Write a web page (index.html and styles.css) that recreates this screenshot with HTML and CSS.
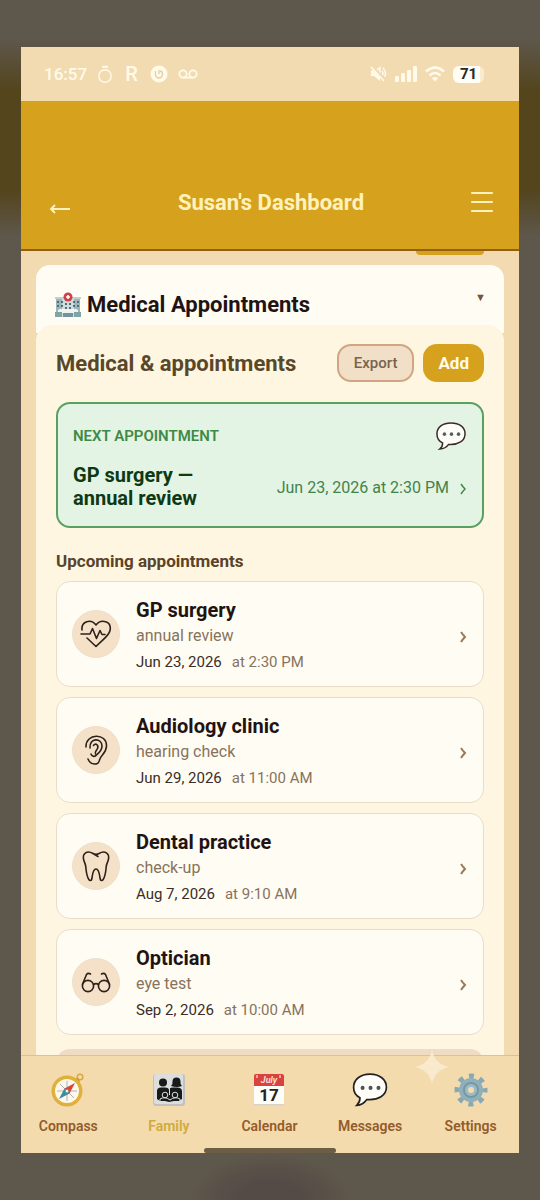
FILE: index.html
```
<!DOCTYPE html>
<html lang="en">

<head>
    <meta charset="UTF-8">
    <meta name="viewport" content="width=device-width, initial-scale=1.0">
    <title>Susan's Dashboard</title>
    <link rel="stylesheet" href="styles.css">
</head>

<body>
    <div class="screen">
        <!-- Status bar -->
        <div class="status-bar">
            <div class="status-left">
                <span class="time">16:57</span>
                <svg width="16" height="18" viewBox="0 0 16 18" fill="none" stroke="currentColor" stroke-width="1.4">
                    <circle cx="8" cy="11" r="6.2" />
                    <path d="M5 1.8h6" stroke-width="2" />
                </svg>
                <span class="carrier">R</span>
                <svg width="18" height="18" viewBox="0 0 18 18" fill="none">
                    <circle cx="9" cy="9" r="8.5" fill="currentColor" />
                    <path d="M5.5 6v3.5a3.5 3.5 0 0 0 7 0c0-2-1-3.5-2.5-3.5M9 5v4" stroke="#e6cfa4" stroke-width="1.4" />
                </svg>
                <svg width="20" height="12" viewBox="0 0 20 12" fill="none" stroke="currentColor" stroke-width="1.8">
                    <circle cx="5" cy="6" r="3.6" />
                    <circle cx="15" cy="6" r="3.6" />
                    <path d="M5 9.6h10" />
                </svg>
            </div>
            <div class="status-right">
                <svg width="18" height="18" viewBox="0 0 18 18" fill="none" stroke="currentColor" stroke-width="1.5">
                    <path d="M2 6v5h3l6 5v-4L4 5z" fill="currentColor" stroke="none" />
                    <path d="M8 5l3-2.5v5M13 6q1.5 2 .5 4M14 3q4 4 1.5 9M2 2l13 14" />
                </svg>
                <svg width="22" height="16" viewBox="0 0 22 16" fill="currentColor">
                    <rect x="0" y="10" width="4" height="6" rx="1" />
                    <rect x="6" y="7" width="4" height="9" rx="1" />
                    <rect x="12" y="4" width="4" height="12" rx="1" />
                    <rect x="18" y="0" width="4" height="16" rx="1" />
                </svg>
                <svg width="20" height="16" viewBox="0 0 20 16" fill="none" stroke="currentColor" stroke-width="2.6">
                    <path d="M1 5.5q9-8 18 0M4.5 9.5q5.5-5 11 0" />
                    <path d="M10 15.5L6.8 12.2q3.2-2.6 6.4 0z" fill="currentColor" stroke="none" />
                </svg>
                <span class="battery">71</span>
            </div>
        </div>

        <header class="top-bar">
            <a class="icon-link" href="#" aria-label="Back">
                <svg width="22" height="14" viewBox="0 0 22 14" fill="none" stroke="currentColor" stroke-width="1.8">
                    <path d="M21 7H2M6 3L2 7l4 4" />
                </svg>
            </a>
            <h1>Susan's Dashboard</h1>
            <button class="icon-button" aria-label="Menu">
                <svg width="22" height="22" viewBox="0 0 22 22" stroke="currentColor" stroke-width="2" stroke-linecap="round">
                    <path d="M1 2h20M1 11h20M1 20h20" />
                </svg>
            </button>
        </header>

        <main>
            <div class="previous-action"></div>

            <section class="section">
                <button class="section-toggle" aria-expanded="true">
                    <svg width="26" height="26" viewBox="0 0 26 26">
                        <path d="M1 6h8v19H1zM17 6h8v19h-8z" fill="#9fb4b8" />
                        <path d="M7 5h12v20H7z" fill="#d2dcdd" />
                        <path d="M0 5h9v2H0zM17 5h9v2h-9z" fill="#c4ced0" />
                        <path d="M2 9h2v2H2zM6 9h2v2H6zM2 13h2v2H2zM6 13h2v2H6zM18 9h2v2h-2zM22 9h2v2h-2zM18 13h2v2h-2zM22 13h2v2h-2zM10 11h2v2h-2zM14 11h2v2h-2zM10 15h2v2h-2zM14 15h2v2h-2z" fill="#47727e" />
                        <path d="M3 18l2-1h16l2 1v3H3z" fill="#f2f3ee" />
                        <path d="M8 21h10v4H8z" fill="#7195a0" />
                        <path d="M0 20h7v5H0zM19 20h7v5h-7z" fill="#7ea5a5" />
                        <circle cx="13" cy="5" r="4.5" fill="#cf4148" />
                        <path d="M13 3v4M11 5h4" stroke="#fff" stroke-width="1.6" />
                    </svg>
                    <span class="section-title">Medical Appointments</span>
                    <span class="caret">▼</span>
                </button>

                <div class="panel">
                    <div class="panel-head">
                        <h2>Medical &amp; appointments</h2>
                        <button class="btn btn-export">Export</button>
                        <button class="btn btn-add">Add</button>
                    </div>

                    <a class="next-card" href="#">
                        <span class="next-row">
                            <span class="next-label">NEXT APPOINTMENT</span>
                            <svg width="32" height="30" viewBox="0 0 34 32">
                                <path d="M17 2C8 2 2 6.5 2 13.5c0 4.5 2 8 6 9.8.2 3-.8 5-3 6.7 4.5-.2 7.5-2.2 9.5-5C25 25.800 32 21 32 13.500 32 6.500 26 2 17 2z" fill="#fffdf8" stroke="#3b2a2a" stroke-width="1.6" />
                                <g fill="#5a5f63">
                                    <circle cx="10" cy="14" r="1.9" />
                                    <circle cx="17.5" cy="14" r="1.9" />
                                    <circle cx="25" cy="14" r="1.9" />
                                </g>
                            </svg>
                        </span>
                        <span class="next-row">
                            <span class="next-title">GP surgery —<br>annual review</span>
                            <span class="next-when">Jun 23, 2026 at 2:30 PM</span>
                            <svg class="chevron" width="8" height="14" viewBox="0 0 8 14">
                                <path d="M2 2q2 3 4 5q-2 2-4 5" />
                            </svg>
                        </span>
                    </a>

                    <h3>Upcoming appointments</h3>
                    <ul class="appointments">
                        <li>
                            <a class="appointment" href="#">
                                <span class="badge">
                                    <svg width="32" height="32" viewBox="0 0 32 32">
                                        <path d="M2 12C1 3 11 .5 16 7c5-6.5 16-4 14 5.5C29 18 21 23 16 28.5L7 20M1 16h9l2.5-5.5 4 10 3.5-8 2 4H25" />
                                    </svg>
                                </span>
                                <span class="details">
                                    <strong>GP surgery</strong>
                                    <span class="reason">annual review</span>
                                    <span class="when"><b>Jun 23, 2026</b> <span>at 2:30 PM</span></span>
                                </span>
                                <svg class="chevron" width="8" height="14" viewBox="0 0 8 14">
                                    <path d="M2 2q2 3 4 5q-2 2-4 5" />
                                </svg>
                            </a>
                        </li>
                        <li>
                            <a class="appointment" href="#">
                                <span class="badge">
                                    <svg width="32" height="32" viewBox="0 0 32 32">
                                        <path d="M6 13C5.5-1 27-1.5 26.5 12c-.3 8-6 9-7 14-.8 5.5-9 5.5-11.5-1" />
                                        <path d="M10 14C9 3.5 22 3.5 22 12c0 5-3 6.5-5.5 9-1.5 2-4.5 2-5.5-1" />
                                        <path d="M13.5 11.5c2-3 5.5-.5 4 3-.8 2-3 3-2 5.5" />
                                    </svg>
                                </span>
                                <span class="details">
                                    <strong>Audiology clinic</strong>
                                    <span class="reason">hearing check</span>
                                    <span class="when"><b>Jun 29, 2026</b> <span>at 11:00 AM</span></span>
                                </span>
                                <svg class="chevron" width="8" height="14" viewBox="0 0 8 14">
                                    <path d="M2 2q2 3 4 5q-2 2-4 5" />
                                </svg>
                            </a>
                        </li>
                        <li>
                            <a class="appointment" href="#">
                                <span class="badge">
                                    <svg width="32" height="32" viewBox="0 0 32 32">
                                        <path d="M13 3.5C7 0 2.5 3.5 3.5 9c.5 3 2 4.5 2.3 8 .4 4 .7 9 3 12.5 1 1.500 2.700 1.200 3-.5.6-4 1-10 4.200-10s3.600 6 4.200 10c.3 1.700 2 2 3 .5 2.300-3.500 2.600-8.500 3-12.500.3-3.500 1.800-5 2.300-8 1-5.500-3.500-9-9.500-5.500-2 1-4 1-6 0l5 3" />
                                    </svg>
                                </span>
                                <span class="details">
                                    <strong>Dental practice</strong>
                                    <span class="reason">check-up</span>
                                    <span class="when"><b>Aug 7, 2026</b> <span>at 9:10 AM</span></span>
                                </span>
                                <svg class="chevron" width="8" height="14" viewBox="0 0 8 14">
                                    <path d="M2 2q2 3 4 5q-2 2-4 5" />
                                </svg>
                            </a>
                        </li>
                        <li>
                            <a class="appointment" href="#">
                                <span class="badge">
                                    <svg width="32" height="32" viewBox="0 0 32 32">
                                        <circle cx="8" cy="20" r="5.6" />
                                        <circle cx="24" cy="20" r="5.6" />
                                        <path d="M13.5 18.5q2.5-1.8 5 0M2.6 18L6.5 8.5Q8 6.5 10.5 8M29.4 18L25.5 8.5Q24 6.5 21.5 8" />
                                    </svg>
                                </span>
                                <span class="details">
                                    <strong>Optician</strong>
                                    <span class="reason">eye test</span>
                                    <span class="when"><b>Sep 2, 2026</b> <span>at 10:00 AM</span></span>
                                </span>
                                <svg class="chevron" width="8" height="14" viewBox="0 0 8 14">
                                    <path d="M2 2q2 3 4 5q-2 2-4 5" />
                                </svg>
                            </a>
                        </li>
                    </ul>
                    <div class="more"></div>
                </div>
            </section>
        </main>

        <nav class="tabs">
            <a class="tab" href="#">
                <svg width="34" height="34" viewBox="0 0 34 34">
                    <circle cx="29" cy="4" r="2.8" fill="none" stroke="#d9aa38" stroke-width="1.5" />
                    <path d="M24 6l3-1 2 3-2 3z" fill="#c99a2c" />
                    <circle cx="16" cy="18" r="15.5" fill="#e0b03c" />
                    <circle cx="16" cy="18" r="12" fill="#fdf8ea" />
                    <path d="M16 8v20M6 18h20M9 11l14 14" stroke="#a9b6b4" stroke-width="1" />
                    <path d="M24 10l-5.5 10.5-5-5z" fill="#d4473f" />
                    <path d="M8 26l5.5-10.5 5 5z" fill="#3d8aa3" />
                    <circle cx="16" cy="18" r="1.5" fill="#e9eeea" />
                </svg>
                <span>Compass</span>
            </a>
            <a class="tab active" href="#">
                <svg width="34" height="34" viewBox="0 0 34 34">
                    <rect x="1" y="1" width="32" height="32" rx="3" fill="#bfc2c1" />
                    <rect x="2" y="1" width="29" height="30" rx="2" fill="#dcdedc" />
                    <g fill="#17191a">
                        <circle cx="11" cy="9.5" r="4" />
                        <path d="M19 13q2-2 1.5-4.5a4 4 0 0 1 8 0Q28 11 30 13q-5 2-11 0z" />
                        <path d="M5 26V18q0-3.5 4-3.5h4q4 0 4 3 0-3 4-3h4q5 0 5 4V26l-3 2h-5l-5 1-4-1H8z" />
                    </g>
                    <g stroke="#dcdedc" stroke-width="1" fill="none">
                        <circle cx="13" cy="22" r="2.8" />
                        <circle cx="23" cy="22" r="2.8" />
                        <path d="M8 28v-2q5-3 10 1 5-4 10-1v2M17.5 15v7" />
                    </g>
                </svg>
                <span>Family</span>
            </a>
            <a class="tab" href="#">
                <svg width="34" height="34" viewBox="0 0 34 34">
                    <rect x="2" y="2" width="30" height="30" rx="2" fill="#fffdf8" />
                    <path d="M2 31h30v1.5H2z" fill="#d8d3c8" />
                    <path d="M2 13V3q0-2 2-2h26q2 0 2 2v10z" fill="#d9433f" />
                    <path d="M5 2v3M28 2v3" stroke="#f1c8bd" stroke-width="1.5" />
                    <text class="cal-month" x="17" y="10" text-anchor="middle">July</text>
                    <text class="cal-day" x="17" y="28" text-anchor="middle">17</text>
                </svg>
                <span>Calendar</span>
            </a>
            <a class="tab" href="#">
                <svg width="36" height="34" viewBox="0 0 34 32">
                    <path d="M17 1C8 1 1.5 6 1.5 13.5c0 4.5 2 8 6 9.8.2 3-.8 5-3 7.2 4.5-.2 7.5-2.7 9.5-5.5C25 26 32.5 21 32.5 13.5 32.5 6 26 1 17 1z" fill="#fffdf8" stroke="#222" stroke-width="1.6" />
                    <g fill="#4b5459">
                        <circle cx="10" cy="14" r="1.9" />
                        <circle cx="17.5" cy="14" r="1.9" />
                        <circle cx="25" cy="14" r="1.9" />
                    </g>
                </svg>
                <span>Messages</span>
            </a>
            <a class="tab" href="#">
                <svg width="34" height="34" viewBox="0 0 34 34">
                    <circle cx="17" cy="17" r="14" fill="none" stroke="#88a8b3" stroke-width="5" stroke-dasharray="5 5.995" stroke-dashoffset="2.5" />
                    <circle cx="17" cy="17" r="12" fill="#8fafba" />
                    <circle cx="17" cy="17" r="8" fill="#7898a5" />
                    <circle cx="17" cy="17" r="6" fill="#9dbbc4" />
                    <circle cx="17" cy="17" r="3" fill="#f3dcb0" />
                </svg>
                <span>Settings</span>
            </a>
            <svg class="sparkle" width="34" height="34" viewBox="0 0 34 34">
                <path d="M17 0q3 14 17 17-14 3-17 17Q14 20 0 17 14 14 17 0z" fill="#fbeed6" />
            </svg>
            <span class="home-indicator"></span>
        </nav>
    </div>
</body>

</html>
```

FILE: styles.css
```
* {
    box-sizing: border-box;
}

body {
    margin: 0;
    height: 100vh;
    padding: 47px 21px;
    font-family: Roboto, "Liberation Sans", sans-serif;
    background:
        radial-gradient(ellipse 80px 46px at 50% 100%, #544b46 40%, transparent) no-repeat,
        linear-gradient(#5e574b 40px, #54451d 90px, #54451d 190px, #5e574b 236px);
}

a {
    color: inherit;
    text-decoration: none;
}

button {
    font-family: inherit;
    cursor: pointer;
}

h1,
h2,
h3 {
    margin: 0;
}

svg {
    flex-shrink: 0;
}

.screen {
    height: 100%;
    display: flex;
    flex-direction: column;
    overflow: hidden;
    background: #f3dbb1;
}

/* status bar */
.status-bar {
    height: 54px;
    flex-shrink: 0;
    padding: 0 35px 0 23px;
    display: flex;
    align-items: center;
    justify-content: space-between;
    color: #fffaea;
}

.status-left,
.status-right {
    display: flex;
    align-items: center;
}

.status-left {
    gap: 10px;
}

.status-right {
    gap: 8px;
}

.time {
    font-size: 17px;
    font-weight: 500;
}

.carrier {
    margin: 0 2px;
    font-size: 20px;
    font-weight: 500;
}

.battery {
    width: 31px;
    height: 17px;
    border-radius: 6px;
    background: linear-gradient(90deg, #fffdf6 86%, #fbecd0 86%);
    color: #2b2927;
    font-size: 15px;
    font-weight: 700;
    line-height: 17px;
    text-align: center;
}

/* header */
.top-bar {
    height: 150px;
    flex-shrink: 0;
    padding: 54px 26px 0 28px;
    display: flex;
    align-items: center;
    justify-content: space-between;
    background: #d6a21e;
    border-bottom: 2px solid #925f10;
    color: #fff2bd;
}

.top-bar h1,
.section-title,
.panel-head h2 {
    font-size: 22px;
    font-weight: 700;
}

.icon-link {
    display: flex;
    padding-top: 14px;
}

.icon-button {
    display: flex;
    padding: 0;
    border: none;
    background: none;
    color: inherit;
}

/* content */
main {
    flex: 1;
    min-height: 0;
    overflow: hidden;
    padding: 0 15px;
}

.previous-action {
    width: 68px;
    height: 4px;
    margin: 0 20px 10px auto;
    border-radius: 0 0 12px 12px;
    background: #d6a21e;
}

.section {
    border-radius: 14px 14px 0 0;
    overflow: hidden;
}

.section-toggle {
    width: 100%;
    height: 68px;
    padding: 11px 18px 0 19px;
    display: flex;
    align-items: center;
    gap: 6px;
    border: none;
    background: #fffcf4;
    color: #1f1412;
}

.caret {
    margin: 0 0 14px auto;
    font-size: 11px;
    color: #755437;
}

.panel {
    margin-top: -8px;
    padding: 19px 20px;
    border-radius: 16px 16px 0 0;
    background: #fef6e0;
}

.panel-head {
    display: flex;
    align-items: center;
    gap: 9px;
    margin-bottom: 20px;
}

.panel-head h2 {
    margin-right: auto;
    color: #59472a;
}

.btn {
    height: 38px;
    padding: 0 15px;
    border-radius: 14px;
}

.btn-export {
    border: 2px solid #d0a680;
    background: #f2dfc8;
    color: #78644f;
    font-size: 15px;
    font-weight: 500;
}

.btn-add {
    border: none;
    background: #d6a21e;
    color: #fffbea;
    font-size: 17px;
    font-weight: 700;
}

.next-card {
    display: flex;
    flex-direction: column;
    gap: 13px;
    padding: 17px 15px 16px;
    border: 2px solid #5aa061;
    border-radius: 14px;
    background: #e4f4e4;
    color: #3f8a47;
}

.next-row {
    display: flex;
    align-items: center;
    gap: 10px;
}

.next-label {
    margin-right: auto;
    font-size: 15px;
    font-weight: 600;
}

.next-title {
    margin-right: auto;
    font-size: 20px;
    font-weight: 700;
    line-height: 23px;
    color: #0d3a14;
}

.next-when {
    font-size: 16px;
    color: #42834a;
}

.chevron {
    fill: none;
    stroke: currentColor;
    stroke-width: 2;
}

.next-card .chevron {
    margin-top: 4px;
    stroke-width: 1.5;
}

.panel h3 {
    margin: 22px 0 9px;
    font-size: 17px;
    font-weight: 700;
    line-height: 22px;
    color: #59432a;
}

.appointments {
    margin: 0;
    padding: 0;
    list-style: none;
    display: flex;
    flex-direction: column;
    gap: 10px;
}

.appointment {
    height: 106px;
    padding: 0 16px 0 15px;
    display: flex;
    align-items: center;
    gap: 16px;
    border: 1px solid #e9ddca;
    border-radius: 14px;
    background: #fffcf4;
    color: #9b7a57;
}

.appointment .chevron {
    margin-top: 6px;
}

.badge {
    width: 48px;
    height: 48px;
    display: flex;
    align-items: center;
    justify-content: center;
    border: 1px solid #eddfcb;
    border-radius: 50%;
    background: #f5e1c8;
}

.badge svg {
    fill: none;
    stroke: #2d211c;
    stroke-width: 1.6;
    stroke-linecap: round;
    stroke-linejoin: round;
}

.details {
    flex: 1;
    padding-top: 4px;
    display: flex;
    flex-direction: column;
}

.details strong {
    font-size: 20px;
    font-weight: 700;
    line-height: 26px;
    color: #1f1412;
}

.reason {
    font-size: 16px;
    line-height: 26px;
    color: #87735b;
}

.when {
    display: flex;
    gap: 10px;
    font-size: 15px;
    line-height: 26px;
    color: #87735b;
}

.when b {
    font-weight: 400;
    color: #3a2d27;
}

.more {
    height: 40px;
    margin-top: 14px;
    border-radius: 14px;
    background: #f0dcc2;
}

/* bottom navigation */
.tabs {
    position: relative;
    height: 98px;
    flex-shrink: 0;
    margin: 0 -2px 0 -3px;
    display: flex;
    border-top: 1px solid #e2bf8f;
    background: #f3dbae;
}

.tab {
    flex: 1;
    padding-top: 17px;
    display: flex;
    flex-direction: column;
    align-items: center;
    gap: 10px;
    font-size: 14px;
    font-weight: 600;
    line-height: 18px;
    color: #935c2a;
}

.tab.active {
    color: #d0aa3c;
}

.cal-month {
    font-size: 9px;
    font-style: italic;
    fill: #fbe3dc;
}

.cal-day {
    font-size: 17px;
    font-weight: 700;
    fill: #222;
}

.sparkle {
    position: absolute;
    right: 72px;
    top: -6px;
    opacity: 0.8;
}

.home-indicator {
    position: absolute;
    left: 50%;
    bottom: 0;
    width: 132px;
    height: 5px;
    margin-left: -66px;
    border-radius: 3px;
    background: #6c5d44;
}
```
